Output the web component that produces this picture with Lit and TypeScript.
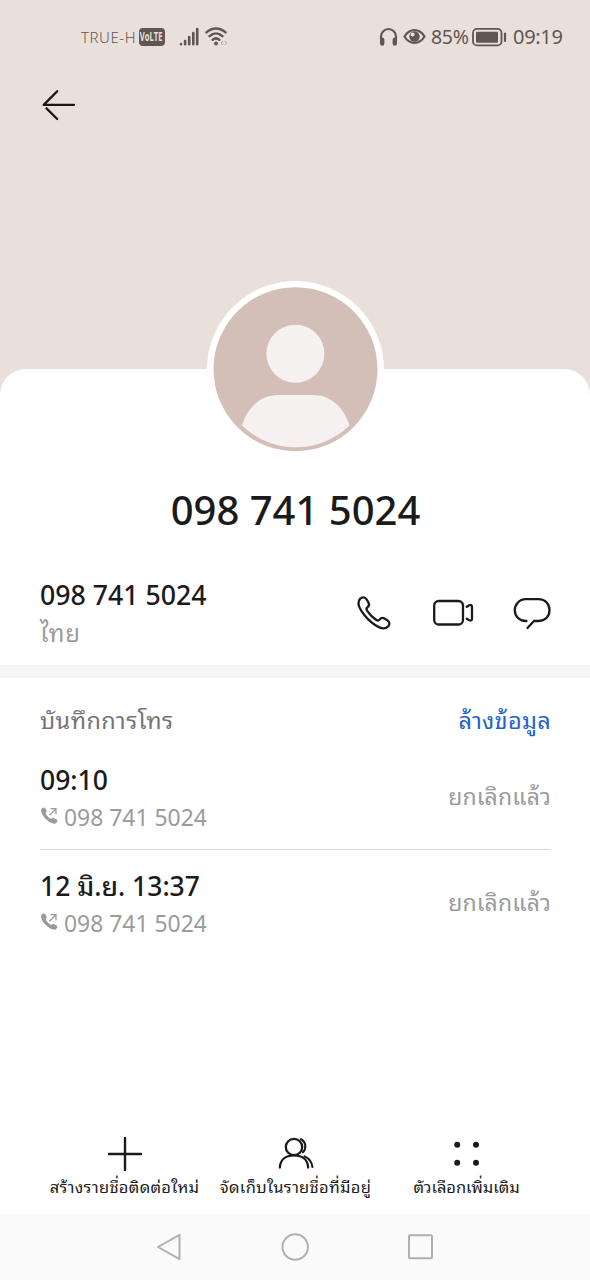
import { LitElement, html, css, svg } from "lit";
import { customElement, property } from "lit/decorators.js";

const fontStack = css`"Noto Sans", "Noto Sans Thai Looped", "Noto Serif Thai", "Noto Sans Thai", sans-serif`;

@customElement("status-bar")
class StatusBar extends LitElement {
  static styles = css`
    :host { display: flex; height: 74px; align-items: center; color: #5f5754; font-family: ${fontStack}; }
    svg { display: block; flex: none; }
    .carrier { margin-left: 81px; width: 57.5px; font-size: 15px; line-height: 24px; letter-spacing: 0.55px; font-weight: 350; white-space: nowrap; }
    .volte { display: flex; justify-content: center; width: 26px; height: 18px; border-radius: 4px; background: #5f5754; color: #eae0db;
      font: 700 11.5px/18px "Open Sans", sans-serif; }
    .volte span { transform: scaleX(0.66); }
    .signal { margin-left: 14px; }
    .wifi { margin-left: 4px; }
    .right { display: flex; align-items: center; margin-left: auto; margin-right: 27px; }
    .eye { margin-left: 5px; }
    .pct { margin-left: 5px; width: 41px; font-size: 19.5px; line-height: 28px; letter-spacing: -0.3px; }
    .time { margin-left: 6px; width: 50px; font-size: 20px; line-height: 28px; letter-spacing: -0.3px; white-space: nowrap; }
  `;
  render() {
    return html`
      <span class="carrier">TRUE-H</span><div class="volte"><span>VoLTE</span></div>
      <svg class="signal" width="22" height="20" viewBox="0 0 22 20" stroke="currentColor" stroke-width="2.6" stroke-linecap="round">
        <path d="M2 17.1V17.300M6.100 14V17.300M10.200 10V17.300M14.300 6V17.300M18.200 2V17.300" />
      </svg>
      <svg class="wifi" width="24" height="20" viewBox="0 0 24 20" fill="none" stroke="currentColor" stroke-width="2.5" stroke-linecap="round">
        <path d="M1.500 5.400C7 .1 15 .1 20.500 5.400M4.600 9.200C8.500 5.500 13.500 5.500 17.400 9.200M7.700 12.800C9.700 11.100 12.300 11.100 14.300 12.800" />
        <circle cx="11" cy="16.500" r="1.900" fill="currentColor" stroke="none" />
        <path d="M17.800 14.300l-1.700 1.700 1.700 1.700M20 14.300l1.700 1.700-1.700 1.700" stroke-width="1" opacity=".45" />
      </svg>
      <div class="right">
        <svg width="19" height="20" viewBox="0 0 19 20" fill="none" stroke="currentColor">
          <path d="M2 13V9.500a7.500 7.500 0 0 1 15 0V13" stroke-width="2.200" />
          <path d="M3.200 12.800v3.800M15.800 12.800v3.800" stroke-width="4.400" stroke-linecap="round" />
        </svg>
        <svg class="eye" width="23" height="18" viewBox="0 0 23 18" fill="none" stroke="currentColor">
          <path d="M1.500 8.500C6.500 0 16.500 0 21.500 8.500 16.500 17 6.500 17 1.500 8.500Z" stroke-width="2.200" stroke-linejoin="round" />
          <circle cx="11.500" cy="8.500" r="5.200" fill="currentColor" stroke="none" />
          <circle cx="9.600" cy="6.500" r="2" fill="#eae0db" stroke="none" />
        </svg>
        <span class="pct">85%</span>
        <svg width="35" height="19" viewBox="0 0 35 19" fill="none" stroke="currentColor">
          <rect x="1" y=".9" width="28.500" height="16.500" rx="4" stroke-width="1.800" />
          <rect x="4" y="3.700" width="22" height="11" rx="1" fill="currentColor" stroke="none" />
          <path d="M33 5.500v7.500" stroke-width="2.200" stroke-linecap="round" />
        </svg>
        <span class="time">09:19</span>
      </div>
    `;
  }
}

@customElement("call-entry")
class CallEntry extends LitElement {
  @property() when = "";
  @property() number = "";
  @property() result = "";
  static styles = css`
    :host { display: flex; justify-content: space-between; align-items: center; height: 105px; font-family: ${fontStack}; }
    .info { padding-top: 5px; }
    .when { font-size: 26.5px; line-height: 37px; height: 38px; font-weight: 500; color: #1b1b1b; white-space: pre; }
    .line { display: flex; align-items: center; height: 36px; font-size: 22.9px; line-height: 36px; color: #9b9b9b; }
    .line svg { width: 24px; height: 20px; flex: none; margin-top: -4px; }
    .result { padding-bottom: 2px; font-size: 23px; line-height: 36px; letter-spacing: 0.15px; color: #9b9b9b; white-space: nowrap; }
  `;
  render() {
    return html`
      <div class="info">
        <div class="when">${this.when}</div>
        <div class="line">
          <svg viewBox="0 0 24 20" fill="none">
            <path d="M1.200 3.200C2.500 1.200 4.200 1 5.200 2.300L6.600 4.400C7.300 5.700 5.400 6.700 5.700 7.600C6.800 9.800 8.500 11.600 10.800 12.800C11.800 13.100 12.600 11.300 13.800 11.900L16.700 13.600C18 14.400 17.500 16 15.900 17.200C13.900 18.500 9.500 16.800 6 13.300C2.300 9.600 .4 5.600 1.200 3.200Z" fill="#9b9b9b" />
            <path d="M9.500 9.300L15.700 3M10.500 2.700H16V8.300" stroke="#9b9b9b" stroke-width="1.300" />
          </svg>
          <span>${this.number}</span>
        </div>
      </div>
      <span class="result">${this.result}</span>
    `;
  }
}

const icons = {
  add: svg`<path d="M20 4v32M4 20h32" stroke-width="2.400" />`,
  save: svg`<circle cx="18" cy="13" r="8.200" /><path d="M3.900 33.500C4.200 26 9.500 21.400 18 21.400S31.800 26 32.100 33.500" /><path d="M25 5.200C30.300 8 30.500 14.500 27 18.200M28.500 22.400C33 24.500 36 28 36.400 33" stroke-width="2.100" />`,
  more: svg`<g fill="#1b1b1b" stroke="none"><circle cx="10.200" cy="10.800" r="3"/><circle cx="29" cy="10.800" r="3"/><circle cx="10.200" cy="28.800" r="3"/><circle cx="29" cy="28.800" r="3"/></g>`,
};

@customElement("app-root")
class AppRoot extends LitElement {
  static styles = css`
    :host { display: flex; flex-direction: column; height: 1280px; background: #eae0db; color: #1b1b1b; font-family: ${fontStack}; overflow: hidden; }
    svg { display: block; flex: none; }
    .hero { height: 369px; flex: none; }
    .back { margin: 12px 0 0 40px; }
    .sheet { flex: 1; display: flex; flex-direction: column; background: #fff; border-radius: 26px 26px 0 0; }
    .avatar { align-self: center; margin-top: -88px; }
    .title { height: 60px; margin-top: 22px; padding-left: 1px; text-align: center; font-size: 40px; line-height: 60px; font-weight: 500; }
    .contact { display: flex; justify-content: space-between; align-items: flex-start; height: 125px; box-sizing: border-box; padding: 35px 38px 0 40px; }
    .phone { font-size: 26.700px; line-height: 40px; font-weight: 500; }
    .country { font-size: 24px; line-height: 36px; letter-spacing: 0.800px; color: #9b9b9b; }
    .actions { display: flex; gap: 38px; padding-top: 18px; }
    .band { height: 13px; background: #f5f5f5; }
    .history { padding: 0 39px 0 40px; }
    .heading { display: flex; justify-content: space-between; height: 66px; padding-top: 24px; box-sizing: border-box; font-size: 23.500px; line-height: 36px; letter-spacing: 0.400px; color: #757575; white-space: nowrap; }
    .clear { color: #1f63d0; letter-spacing: 0.300px; }
    .rule { height: 1px; background: #d9d9d9; }
    .tools { display: grid; grid-template-columns: 171px 171px 171px; padding-left: 39px; height: 80px; margin-top: auto; }
    .tool { display: flex; flex-direction: column; align-items: center; font-size: 16.500px; line-height: 26px; letter-spacing: 0.300px; white-space: nowrap; }
    .tool:last-child { letter-spacing: -0.050px; }
    .nav { display: flex; align-items: center; height: 66px; background: #fafafa; padding-left: 154px; gap: 96px; }
  `;
  render() {
    return html`
      <div class="hero">
        <status-bar></status-bar>
        <svg class="back" width="38" height="38" viewBox="0 0 38 38" fill="none" stroke="#1b1715" stroke-width="2.300" stroke-linecap="round" stroke-linejoin="round">
          <path d="M17.200 5.300L3.700 18.900H34M6.500 22.400L17.200 33" />
        </svg>
      </div>
      <div class="sheet">
        <svg class="avatar" width="177" height="177" viewBox="0 0 177 177">
          <circle cx="88.500" cy="88.500" r="88.500" fill="#fff" />
          <circle cx="88.500" cy="88.200" r="82" fill="#d3bfb8" />
          <g fill="#f5f1f1">
            <circle cx="88.400" cy="72.700" r="29" />
            <path d="M35 144.500C40.500 127 53 114 71 114H106C124 114 137 127 142.500 144.500A77 77 0 0 1 35 144.500Z" />
          </g>
        </svg>
        <div class="title">098 741 5024</div>
        <div class="contact">
          <div>
            <div class="phone">098 741 5024</div>
            <div class="country">ไทย</div>
          </div>
          <div class="actions">
            <svg width="40" height="40" viewBox="0 0 40 40" fill="none" stroke="#1b1b1b" stroke-width="2.300" stroke-linejoin="round">
              <path d="M6.200 5.600C8.500 3.600 10.700 4 12.300 6L14.400 9.300C15.800 11.500 15.300 12.700 13.600 14.200C12.200 15.400 12.100 16.200 13 17.600C15.500 21.300 18.500 24.400 22.400 27C23.800 27.900 24.600 27.700 25.700 26.500C27.200 24.700 28.500 24.300 30.500 25.500L33.500 27.400C35.700 29 36 31.300 34.300 33.300C31.700 36 27.500 36.200 22.300 32.800C16.500 29.200 10.800 23.500 7.200 17.700C4 12.500 3.800 8.200 6.200 5.600Z" />
            </svg>
            <svg width="42" height="40" viewBox="0 0 42 40" fill="none" stroke="#1b1b1b" stroke-width="2.300" stroke-linecap="round" stroke-linejoin="round">
              <rect x="2.200" y="8" width="28.800" height="23.500" rx="4.500" />
              <path d="M34.800 13.800L37.300 12.300Q40 11.200 40 14V25.500Q40 28.300 37.300 27.200L34.800 25.700" />
            </svg>
            <svg width="40" height="40" viewBox="0 0 40 40" fill="none" stroke="#1b1b1b" stroke-width="2.300" stroke-linecap="round" stroke-linejoin="round">
              <path d="M14.500 28H13.700C7 28 2.800 22.800 2.800 17.300S7 6.200 13.700 6.200H26.500C33.500 6.200 37.500 11.500 37.500 17.300S33.500 28 26.500 28H22L15.500 35" />
            </svg>
          </div>
        </div>
        <div class="band"></div>
        <div class="history">
          <div class="heading"><span>บันทึกการโทร</span><span class="clear">ล้างข้อมูล</span></div>
          <call-entry when="09:10" number="098 741 5024" result="ยกเลิกแล้ว"></call-entry>
          <div class="rule"></div>
          <call-entry when="12 มิ.ย. 13:37" number="098 741 5024" result="ยกเลิกแล้ว"></call-entry>
        </div>
        <div class="tools">
          ${[
            { icon: icons.add, label: "สร้างรายชื่อติดต่อใหม่" },
            { icon: icons.save, label: "จัดเก็บในรายชื่อที่มีอยู่" },
            { icon: icons.more, label: "ตัวเลือกเพิ่มเติม" },
          ].map((t) => html`<div class="tool">
            <svg width="40" height="40" viewBox="0 0 40 40" fill="none" stroke="#1b1b1b" stroke-width="2.300" stroke-linecap="round">${t.icon}</svg>
            <span>${t.label}</span>
          </div>`)}
        </div>
        <div class="nav">
          <svg width="30" height="30" viewBox="0 0 30 30" fill="none" stroke="#b0b0b0" stroke-width="2" stroke-linejoin="round"><path d="M4 15L25.500 2.800V27.200Z" /></svg>
          <svg width="30" height="30" viewBox="0 0 30 30" fill="none" stroke="#b0b0b0" stroke-width="2"><circle cx="15.200" cy="15" r="12.700" /></svg>
          <svg width="30" height="30" viewBox="0 0 30 30" fill="none" stroke="#b0b0b0" stroke-width="2"><rect x="3" y="3.300" width="23" height="23" rx="1" /></svg>
        </div>
      </div>
    `;
  }
}
